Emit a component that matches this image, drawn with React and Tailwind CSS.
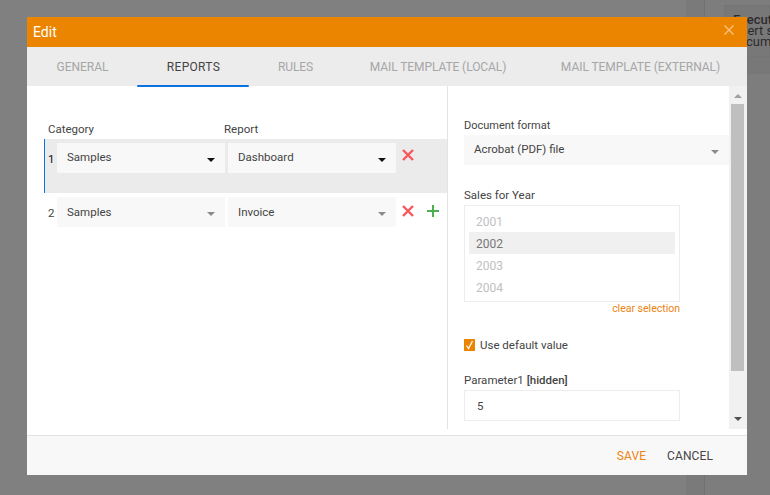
const Caret = ({ dark }) => (
  <svg width="8" height="4" viewBox="0 0 8 4" className="mt-[3px] shrink-0">
    <path d="M0 0H8L4 4Z" fill={dark ? "#111111" : "#8a8a8a"} />
  </svg>
);

const Select = ({ value, dark, textClass, className = "" }) => (
  <div className={`flex h-[30px] items-center justify-between bg-[#f8f8f8] pr-[10px] pl-[10px] ${className}`}>
    <span className={textClass}>{value}</span>
    <Caret dark={dark} />
  </div>
);

const Cross = () => (
  <svg width="12" height="12" viewBox="0 0 12 12" className="shrink-0">
    <path d="M1 1L11 11M11 1L1 11" stroke="#f8575c" strokeWidth="2.4" fill="none" />
  </svg>
);

const Plus = () => (
  <svg width="12" height="12" viewBox="0 0 12 12" className="shrink-0">
    <path d="M6 0V12M0 6H12" stroke="#4caf50" strokeWidth="2" fill="none" />
  </svg>
);

const Tab = ({ children, active, className = "" }) => (
  <div className={`relative flex h-full shrink-0 items-center justify-center text-[12px] whitespace-nowrap ${active ? "text-[#444444]" : "text-[#a6a6a6]"} ${className}`}>
    {children}
    {active && <div className="absolute right-0 bottom-[-1px] -left-px h-[2px] rounded-sm bg-[#0b72e0]" />}
  </div>
);

const Row = ({ n, active, plus }) => (
  <div className={`flex ${active ? "h-[54px] border-l border-[#0b72e0] bg-[#ebebeb] pt-1" : "mt-1 h-[30px] pl-px"}`}>
    <span className={`mt-[8px] w-3 pl-[3px] ${active ? "text-[#111111]" : ""}`}>{n}</span>
    <div className="flex h-[30px] gap-[3px]">
      <Select value="Samples" dark={active} className="w-[168px]" textClass={active ? "-mt-[1px]" : "mt-[1px]"} />
      <Select value={active ? "Dashboard" : "Invoice"} dark={active} className="w-[168px]" textClass={active ? "-mt-[1px]" : "mt-[1px]"} />
    </div>
    <div className={`ml-[6px] flex items-start gap-[13px] ${active ? "pt-[6px]" : "pt-[8px]"}`}>
      <Cross />
      {plus && <Plus />}
    </div>
  </div>
);

const Year = ({ y, selected }) => (
  <div className={`flex h-[22px] items-center pt-[2px] pl-[7px] text-[12px] ${selected ? "bg-[#f0f0f0] text-[#777777]" : "text-[#c0c0c0]"}`}>{y}</div>
);

export default function App() {
  return (
    <div className="relative flex h-[495px] w-[770px] justify-end overflow-hidden bg-[#808080] font-['Roboto',sans-serif] text-[11.5px] text-[#444444]">
      <div className="h-full w-[18px] bg-[#7a7a7a]" />
      <div className="h-full w-[66px] border-l border-[#727272] bg-[#7d7d7d] pt-[5px] pl-[19px]">
        <div className="h-[52px] border border-[#757575] bg-[#787878] pt-2 pl-2 text-[13px] leading-[11px] whitespace-nowrap text-[#2c2c2c]">
          <b className="font-medium">Execute</b>
          <span className="-ml-[3px] block">Insert se</span>
          <span className="-ml-[3px] block">Documen</span>
        </div>
        <div className="h-[17px] bg-[#787878]" />
      </div>

      <div className="absolute top-[17px] left-[27px] flex h-[458px] w-[720px] flex-col bg-white">
        <header className="flex h-[30px] shrink-0 items-center justify-between bg-[#eb8500] pr-[13px] pl-[6px] text-[14px] text-white">
          <span>Edit</span>
          <svg width="10" height="10" viewBox="0 0 10 10" className="-mt-[5px]"><path d="M0.5 0.5L9.5 9.5M9.5 0.5L0.5 9.5" stroke="#f6c27c" strokeWidth="1.4" fill="none" /></svg>
        </header>

        <nav className="flex h-[39px] shrink-0 bg-[#ececec]">
          <Tab className="w-[111px]">GENERAL</Tab>
          <Tab active className="w-[111px] tracking-[0.3px]">REPORTS</Tab>
          <Tab className="w-[93px] tracking-[-0.1px]">RULES</Tab>
          <Tab className="w-[192px] tracking-[-0.08px]">MAIL TEMPLATE (LOCAL)</Tab>
          <Tab className="w-[213px] tracking-[-0.05px]">MAIL TEMPLATE (EXTERNAL)</Tab>
        </nav>

        <main className="flex h-[343px] shrink-0">
          <section className="w-[421px] shrink-0 border-r border-[#e3e3e3] pt-[35px] pl-[17px]">
            <div className="flex h-[18px] pl-1">
              <span className="w-[176px]">Category</span>
              <span>Report</span>
            </div>
            <Row n="1" active />
            <Row n="2" plus />
          </section>

          <section className="flex min-w-0 flex-1">
            <div className="flex-1 pt-[32px] pl-4">
              <div className="h-[17px] text-[11px]">Document format</div>
              <div className="flex h-[30px] items-center justify-between bg-[#f8f8f8] pr-[10px] pl-[10px]">
                <span className="-mt-[1px]">Acrobat (PDF) file</span>
                <Caret />
              </div>
              <div className="mt-[22px] h-[18px]">Sales for Year</div>
              <div className="h-[97px] w-[216px] border border-[#ececec] px-1 pt-1">
                <Year y="2001" />
                <Year y="2002" selected />
                <Year y="2003" />
                <Year y="2004" />
              </div>
              <div className="-mt-[1px] w-[216px] text-right text-[10.5px] text-[#ec8410]">clear selection</div>
              <div className="mt-[22px] flex h-[13px] items-center gap-[5px]">
                <div className="flex h-[12px] w-[11px] items-center justify-center bg-[#eb8500]">
                  <svg width="9" height="10" viewBox="0 0 9 10"><path d="M1.5 5.5L3.5 8.5L7.5 1" stroke="#ffffff" strokeWidth="1.3" fill="none" /></svg>
                </div>
                <span>Use default value</span>
              </div>
              <div className="mt-[20px] h-[18px]">Parameter1 <span className="font-medium">[hidden]</span></div>
              <div className="flex h-[31px] w-[216px] items-center border border-[#ececec] pt-[3px] pl-3">5</div>
            </div>
            <div className="relative flex w-[18px] shrink-0 flex-col bg-[#f1f1f1]">
              <svg width="8" height="4" viewBox="0 0 8 4" className="absolute top-[8px] left-[5px]"><path d="M0 4H8L4 0Z" fill="#a0a0a0" /></svg>
              <div className="mt-[18px] ml-[2px] h-[267px] w-[13px] bg-[#bfbfbf]" />
              <svg width="8" height="4" viewBox="0 0 8 4" className="absolute bottom-[8px] left-[5px]"><path d="M0 0H8L4 4Z" fill="#505050" /></svg>
            </div>
          </section>
        </main>

        <footer className="mt-[6px] flex flex-1 items-center justify-end gap-[21px] border-t border-[#e3e3e3] bg-[#f8f8f8] pr-[34px] text-[12px]">
          <span className="-ml-px tracking-[0.1px] text-[#ec8410]">SAVE</span>
          <span className="tracking-[0.1px]">CANCEL</span>
        </footer>
      </div>
    </div>
  );
}
